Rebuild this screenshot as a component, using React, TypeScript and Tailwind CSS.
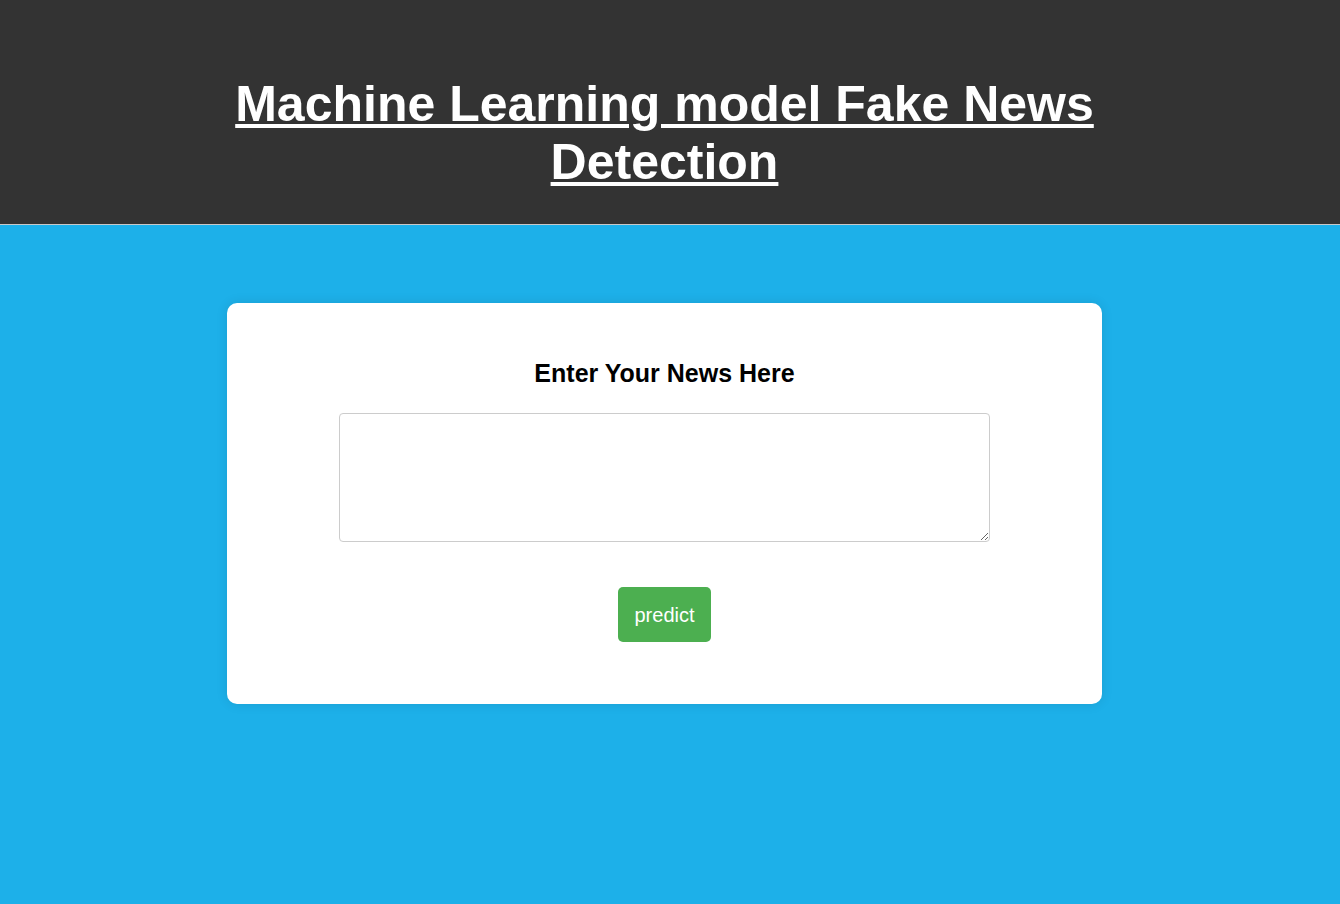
export default function App() {
  return (
    <div className="min-h-[904px] bg-[#1db0e9] font-['Liberation_Sans',Arial,sans-serif]">
      <header className="flex h-[225px] items-center justify-center border-b border-[#c8c8c8] bg-[#333333] pt-[42px] pr-[11px]">
        <h1 className="mx-auto max-w-[900px] text-center text-[50px] font-bold leading-[58px] text-white underline decoration-[4px] underline-offset-[3px]">
          Machine Learning model Fake News Detection
        </h1>
      </header>
      <main className="flex justify-center pt-[78px] pr-[11px]">
        <div className="flex h-[401px] w-[875px] flex-col items-center rounded-[10px] bg-white pt-[56px] shadow-[0_0_12px_rgba(0,0,0,0.1)]">
          <h2 className="text-[25px] font-bold leading-[28px] text-black">Enter Your News Here</h2>
          <textarea className="mt-[26px] h-[129px] w-[651px] resize rounded-[4px] border border-[#cccccc] p-2 outline-none" />
          <button className="mt-[45px] h-[55px] w-[93px] rounded-[5px] bg-[#4caf50] text-[20px] text-white">
            predict
          </button>
        </div>
      </main>
    </div>
  );
}
